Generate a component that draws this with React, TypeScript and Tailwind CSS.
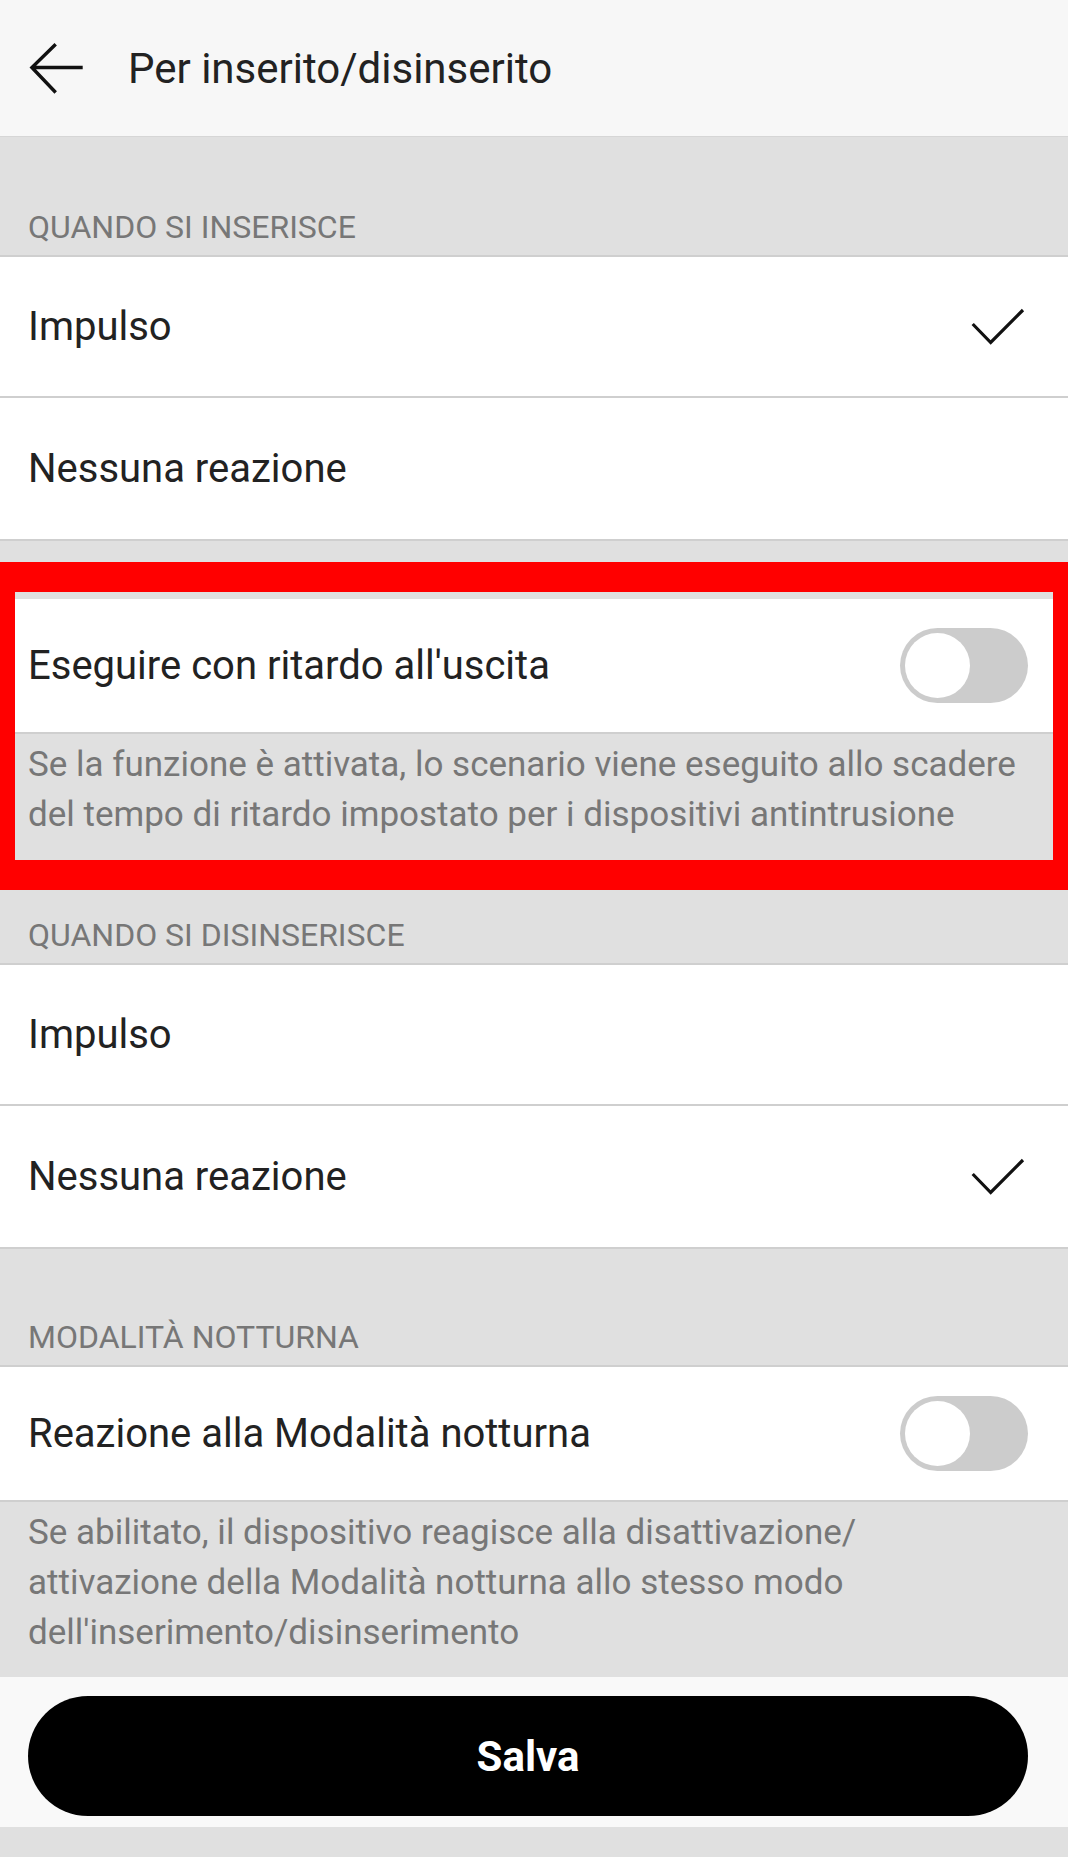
import type { ReactNode } from 'react';

const font = { fontFamily: 'Roboto, "Noto Sans", sans-serif' };

const Label = ({ children, className = '' }: { children: ReactNode; className?: string }) => (
  <div className={`px-[28px] pb-[12px] text-[32px] leading-none text-[#777777] ${className}`}>{children}</div>
);

const Check = () => (
  <svg width="60" height="44" viewBox="0 0 60 44" fill="none">
    <path d="M4.7 19 L22.7 37.5 L55 5" stroke="#111" strokeWidth="3.2" strokeLinejoin="miter" />
  </svg>
);

const OptionRow = ({ label, checked }: { label: string; checked?: boolean }) => (
  <div className="flex h-[141px] items-center justify-between bg-white pl-[28px] pr-[40px]">
    <span className="text-[40px] text-[#222222]">{label}</span>
    {checked && <Check />}
  </div>
);

const Toggle = () => (
  <div className="flex h-[75px] w-[128px] items-center rounded-full bg-[#cccccc] p-[5px]">
    <div className="h-[65px] w-[65px] rounded-full bg-white" />
  </div>
);

const ToggleRow = ({ label }: { label: string }) => (
  <div className="flex h-[135px] items-center justify-between border-b-2 border-[#cfcfcf] bg-white pl-[28px] pr-[40px]">
    <span className="text-[40px] text-[#222222]">{label}</span>
    <Toggle />
  </div>
);

const Desc = ({ children, className = '' }: { children: ReactNode; className?: string }) => (
  <p className={`px-[28px] pt-[6px] text-[35px] leading-[50px] text-[#777777] ${className}`}>{children}</p>
);

export default function App() {
  return (
    <div className="min-h-screen w-[1068px] bg-[#e0e0e0]" style={font}>
      <header className="flex h-[137px] items-center gap-[40px] border-b border-[#d6d6d6] bg-[#f7f7f7] pl-[28px]">
        <svg width="60" height="56" viewBox="0 0 60 56" fill="none">
          <path d="M27.7 4.2 L3.9 27.5 L27.7 52.5 M3.9 27.5 L54.7 27.5" stroke="#111" strokeWidth="3.4" />
        </svg>
        <h1 className="text-[42px] font-normal text-[#222222]">Per inserito/disinserito</h1>
      </header>

      <Label className="pt-[74px]">QUANDO SI INSERISCE</Label>
      <div className="divide-y-2 divide-[#cfcfcf] border-y-2 border-[#cfcfcf]">
        <OptionRow label="Impulso" checked />
        <OptionRow label="Nessuna reazione" />
      </div>

      <div className="relative">
        <div className="h-[58px]" />
        <ToggleRow label="Eseguire con ritardo all'uscita" />
        <Desc className="pb-[24px]">
          Se la funzione è attivata, lo scenario viene eseguito allo scadere del tempo di ritardo impostato per i
          dispositivi antintrusione
        </Desc>
        <div className="pointer-events-none absolute left-0 right-0 top-[21px] h-[328px] border-x-[15px] border-y-[30px] border-[#ff0000]" />
      </div>

      <Label className="pt-[55px]">QUANDO SI DISINSERISCE</Label>
      <div className="divide-y-2 divide-[#cfcfcf] border-y-2 border-[#cfcfcf]">
        <OptionRow label="Impulso" />
        <OptionRow label="Nessuna reazione" checked />
      </div>

      <Label className="pt-[72px]">MODALITÀ NOTTURNA</Label>
      <div className="border-t-2 border-[#cfcfcf]">
        <ToggleRow label="Reazione alla Modalità notturna" />
      </div>
      <Desc className="pb-[19px]">
        Se abilitato, il dispositivo reagisce alla disattivazione/
        <br />
        attivazione della Modalità notturna allo stesso modo
        <br />
        dell'inserimento/disinserimento
      </Desc>

      <footer className="bg-[#f9f9f9] pb-[11px] pl-[28px] pr-[40px] pt-[19px]">
        <button className="flex h-[120px] w-full items-center justify-center rounded-full bg-black text-[42px] font-bold text-white">
          Salva
        </button>
      </footer>
    </div>
  );
}
